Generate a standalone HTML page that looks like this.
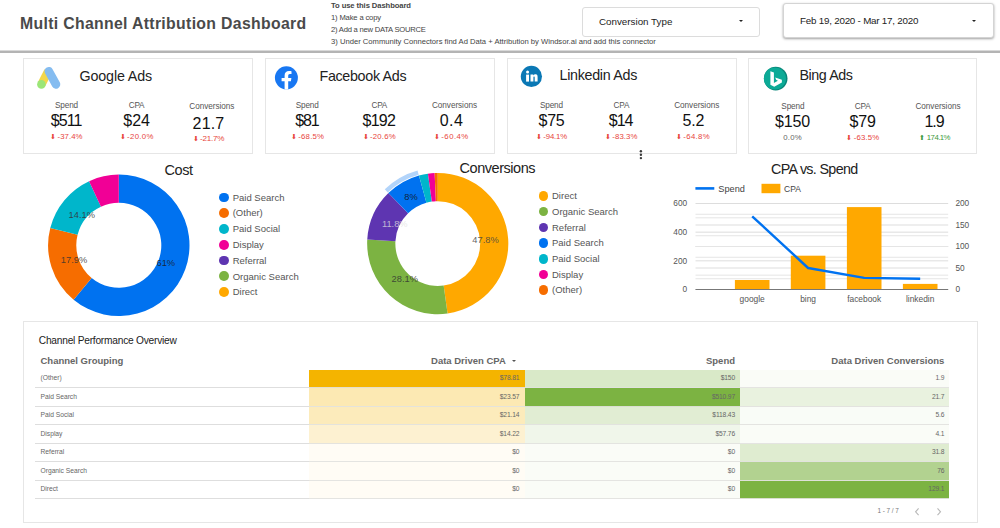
<!DOCTYPE html><html><head><meta charset="utf-8"><title>Multi Channel Attribution Dashboard</title><style>
html,body{margin:0;padding:0;background:#fff;}
body{width:1000px;height:528px;position:relative;overflow:hidden;font-family:"Liberation Sans", sans-serif;color:#222;}
.abs{position:absolute;white-space:nowrap;}
.card{position:absolute;box-sizing:border-box;border:1px solid #e6e6e6;background:#fff;}
.h{position:absolute;white-space:nowrap;font-size:14.5px;letter-spacing:-0.4px;color:#222;line-height:18px;}
.lg{position:absolute;white-space:nowrap;font-size:9.5px;color:#555;line-height:12px;}
.dot{position:absolute;width:9.8px;height:9.8px;border-radius:50%;}
.ins{position:absolute;left:331px;white-space:nowrap;font-size:7.64px;color:#444;line-height:12px;}
.dd{position:absolute;box-sizing:border-box;background:#fff;border:1px solid #dcdcdc;border-radius:3px;}
.ddt{position:absolute;white-space:nowrap;font-size:9.8px;color:#222;line-height:12px;}
.tri{position:absolute;width:0;height:0;border-left:2.7px solid transparent;border-right:2.7px solid transparent;border-top:2.8px solid #222;}
.th{position:absolute;white-space:nowrap;font-size:9.5px;font-weight:bold;color:#666;line-height:12px;}
.rl{position:absolute;left:35px;width:914px;height:1px;background:#dedede;}
.rt{position:absolute;left:40.5px;white-space:nowrap;font-size:6.7px;color:#666;line-height:9px;}
.cell{position:absolute;height:18.5px;}
.cv{position:absolute;white-space:nowrap;font-size:6.7px;letter-spacing:-0.15px;color:#666;line-height:9px;text-align:right;}
</style></head><body>
<div class="abs" style="left:20px;top:12.5px;font-size:15.8px;letter-spacing:0.33px;font-weight:bold;color:#4a4a4a;line-height:22px;">Multi Channel Attribution Dashboard</div>
<div class="ins" style="top:-0.1px;letter-spacing:-0.08px"><b>To use this Dashboard</b></div>
<div class="ins" style="top:12.1px;letter-spacing:-0.16px">1) Make a copy</div>
<div class="ins" style="top:24.3px;letter-spacing:-0.23px">2) Add a new DATA SOURCE</div>
<div class="ins" style="top:35.8px;letter-spacing:0px">3) Under Community Connectors find Ad Data + Attribution by Windsor.ai and add this connector</div>
<div class="dd" style="left:582px;top:7px;width:178px;height:29.5px;"></div>
<div class="ddt" style="left:599px;top:15.5px;">Conversion Type</div>
<div class="tri" style="left:739.2px;top:20px;"></div>
<div class="dd" style="left:783px;top:3px;width:210.5px;height:34.5px;box-shadow:0 1px 2.5px rgba(0,0,0,0.38);border-color:#d4d4d4;"></div>
<div class="ddt" style="left:800px;top:15px;letter-spacing:-0.22px;">Feb 19, 2020 - Mar 17, 2020</div>
<div class="tri" style="left:971.6px;top:20px;"></div>
<div class="abs" style="left:0;top:50px;width:1000px;height:1px;background:#d9d9d9;"></div><div class="abs" style="left:0;top:51px;width:1000px;height:2px;background:#b4b4b4;"></div>
<div class="card" style="left:23px;top:58px;width:230px;height:95.5px;"></div>
<div class="abs" style="left:79.5px;top:66.35px;font-size:14.3px;line-height:20px;letter-spacing:-0.144px;color:#222;">Google Ads</div>
<div class="abs" style="left:-33.47px;top:96.16px;width:200px;text-align:center;font-size:8.2px;line-height:20px;letter-spacing:-0.142px;color:#555;">Spend</div>
<div class="abs" style="left:-33.86px;top:111.36px;width:200px;text-align:center;font-size:16px;line-height:20px;letter-spacing:-0.914px;color:#111;">$511</div>
<div class="abs" style="left:51.28px;top:126.90px;font-size:7.8px;line-height:20px;color:#e8453c;"><span style="display:inline-block;width:7.4px;margin-left:-1.1px;font-size:6.5px;vertical-align:0.3px;">&#11015;</span><span style="letter-spacing:0.039px">-37.4%</span></div>
<div class="abs" style="left:36.49px;top:96.16px;width:200px;text-align:center;font-size:8.2px;line-height:20px;letter-spacing:-0.217px;color:#555;">CPA</div>
<div class="abs" style="left:36.61px;top:111.36px;width:200px;text-align:center;font-size:16px;line-height:20px;letter-spacing:0.018px;color:#111;">$24</div>
<div class="abs" style="left:120.75px;top:126.90px;font-size:7.8px;line-height:20px;color:#e8453c;"><span style="display:inline-block;width:7.4px;margin-left:-1.1px;font-size:6.5px;vertical-align:0.3px;">&#11015;</span><span style="letter-spacing:0.331px">-20.0%</span></div>
<div class="abs" style="left:111.88px;top:96.91px;width:200px;text-align:center;font-size:8.2px;line-height:20px;letter-spacing:-0.043px;color:#555;">Conversions</div>
<div class="abs" style="left:108.48px;top:114.06px;width:200px;text-align:center;font-size:16px;line-height:20px;letter-spacing:0.152px;color:#111;">21.7</div>
<div class="abs" style="left:193.75px;top:129.39px;font-size:8.1px;line-height:20px;color:#e8453c;"><span style="display:inline-block;width:7.4px;margin-left:-1.1px;font-size:6.5px;vertical-align:0.3px;">&#11015;</span><span style="letter-spacing:-0.244px">-21.7%</span></div>
<div class="card" style="left:265px;top:58px;width:230px;height:95.5px;"></div>
<div class="abs" style="left:319.5px;top:66.35px;font-size:14.3px;line-height:20px;letter-spacing:-0.323px;color:#222;">Facebook Ads</div>
<div class="abs" style="left:207.18px;top:96.16px;width:200px;text-align:center;font-size:8.2px;line-height:20px;letter-spacing:-0.142px;color:#555;">Spend</div>
<div class="abs" style="left:206.97px;top:111.36px;width:200px;text-align:center;font-size:16px;line-height:20px;letter-spacing:-1.065px;color:#111;">$81</div>
<div class="abs" style="left:291.98px;top:126.90px;font-size:7.8px;line-height:20px;color:#e8453c;"><span style="display:inline-block;width:7.4px;margin-left:-1.1px;font-size:6.5px;vertical-align:0.3px;">&#11015;</span><span style="letter-spacing:0.206px">-68.5%</span></div>
<div class="abs" style="left:279.29px;top:96.16px;width:200px;text-align:center;font-size:8.2px;line-height:20px;letter-spacing:-0.217px;color:#555;">CPA</div>
<div class="abs" style="left:278.86px;top:111.36px;width:200px;text-align:center;font-size:16px;line-height:20px;letter-spacing:-0.774px;color:#111;">$192</div>
<div class="abs" style="left:363.75px;top:126.90px;font-size:7.8px;line-height:20px;color:#e8453c;"><span style="display:inline-block;width:7.4px;margin-left:-1.1px;font-size:6.5px;vertical-align:0.3px;">&#11015;</span><span style="letter-spacing:0.164px">-20.6%</span></div>
<div class="abs" style="left:354.48px;top:96.16px;width:200px;text-align:center;font-size:8.2px;line-height:20px;letter-spacing:-0.043px;color:#555;">Conversions</div>
<div class="abs" style="left:351.46px;top:111.36px;width:200px;text-align:center;font-size:16px;line-height:20px;letter-spacing:0.419px;color:#111;">0.4</div>
<div class="abs" style="left:435.02px;top:126.90px;font-size:7.8px;line-height:20px;color:#e8453c;"><span style="display:inline-block;width:7.4px;margin-left:-1.1px;font-size:6.5px;vertical-align:0.3px;">&#11015;</span><span style="letter-spacing:0.456px">-60.4%</span></div>
<div class="card" style="left:506.5px;top:58px;width:230px;height:95.5px;"></div>
<div class="abs" style="left:559.5px;top:64.85px;font-size:14.3px;line-height:20px;letter-spacing:-0.300px;color:#222;">Linkedin Ads</div>
<div class="abs" style="left:451.43px;top:96.16px;width:200px;text-align:center;font-size:8.2px;line-height:20px;letter-spacing:-0.142px;color:#555;">Spend</div>
<div class="abs" style="left:451.44px;top:111.36px;width:200px;text-align:center;font-size:16px;line-height:20px;letter-spacing:-0.315px;color:#111;">$75</div>
<div class="abs" style="left:537.00px;top:126.90px;font-size:7.8px;line-height:20px;color:#e8453c;"><span style="display:inline-block;width:7.4px;margin-left:-1.1px;font-size:6.5px;vertical-align:0.3px;">&#11015;</span><span style="letter-spacing:-0.169px">-94.1%</span></div>
<div class="abs" style="left:521.39px;top:96.16px;width:200px;text-align:center;font-size:8.2px;line-height:20px;letter-spacing:-0.217px;color:#555;">CPA</div>
<div class="abs" style="left:520.61px;top:111.36px;width:200px;text-align:center;font-size:16px;line-height:20px;letter-spacing:-0.982px;color:#111;">$14</div>
<div class="abs" style="left:606.00px;top:126.90px;font-size:7.8px;line-height:20px;color:#e8453c;"><span style="display:inline-block;width:7.4px;margin-left:-1.1px;font-size:6.5px;vertical-align:0.3px;">&#11015;</span><span style="letter-spacing:0.081px">-83.3%</span></div>
<div class="abs" style="left:596.73px;top:96.16px;width:200px;text-align:center;font-size:8.2px;line-height:20px;letter-spacing:-0.043px;color:#555;">Conversions</div>
<div class="abs" style="left:593.32px;top:111.36px;width:200px;text-align:center;font-size:16px;line-height:20px;letter-spacing:-0.164px;color:#111;">5.2</div>
<div class="abs" style="left:677.00px;top:126.90px;font-size:7.8px;line-height:20px;color:#e8453c;"><span style="display:inline-block;width:7.4px;margin-left:-1.1px;font-size:6.5px;vertical-align:0.3px;">&#11015;</span><span style="letter-spacing:0.331px">-64.8%</span></div>
<div class="card" style="left:748px;top:58px;width:229px;height:95.5px;"></div>
<div class="abs" style="left:799.5px;top:64.85px;font-size:14.3px;line-height:20px;letter-spacing:-0.431px;color:#222;">Bing Ads</div>
<div class="abs" style="left:692.83px;top:96.91px;width:200px;text-align:center;font-size:8.2px;line-height:20px;letter-spacing:-0.142px;color:#555;">Spend</div>
<div class="abs" style="left:692.43px;top:112.11px;width:200px;text-align:center;font-size:16px;line-height:20px;letter-spacing:-0.149px;color:#111;">$150</div>
<div class="abs" style="left:692.59px;top:127.65px;width:200px;text-align:center;font-size:7.8px;line-height:20px;letter-spacing:0.180px;color:#666;">0.0%</div>
<div class="abs" style="left:762.64px;top:96.91px;width:200px;text-align:center;font-size:8.2px;line-height:20px;letter-spacing:-0.217px;color:#555;">CPA</div>
<div class="abs" style="left:762.53px;top:112.11px;width:200px;text-align:center;font-size:16px;line-height:20px;letter-spacing:-0.148px;color:#111;">$79</div>
<div class="abs" style="left:847.52px;top:127.65px;font-size:7.8px;line-height:20px;color:#e8453c;"><span style="display:inline-block;width:7.4px;margin-left:-1.1px;font-size:6.5px;vertical-align:0.3px;">&#11015;</span><span style="letter-spacing:0.123px">-63.5%</span></div>
<div class="abs" style="left:837.98px;top:96.91px;width:200px;text-align:center;font-size:8.2px;line-height:20px;letter-spacing:-0.043px;color:#555;">Conversions</div>
<div class="abs" style="left:834.10px;top:112.11px;width:200px;text-align:center;font-size:16px;line-height:20px;letter-spacing:-0.997px;color:#111;">1.9</div>
<div class="abs" style="left:920.50px;top:127.65px;font-size:7.8px;line-height:20px;color:#3d9a40;"><span style="display:inline-block;width:7.4px;margin-left:-1.1px;font-size:6.5px;vertical-align:0.3px;">&#11014;</span><span style="letter-spacing:-0.542px">174.1%</span></div>
<svg class="abs" style="left:0;top:0" width="1000" height="160" viewBox="0 0 1000 160">
<line x1="48.2" y1="71.2" x2="41.6" y2="84.2" stroke="#f3d74b" stroke-width="8.4" stroke-linecap="butt"/>
<line x1="48.8" y1="71.2" x2="56" y2="84.4" stroke="#85bcf0" stroke-width="8.6" stroke-linecap="round"/>
<circle cx="41.4" cy="84.4" r="4.3" fill="#9be678"/>
<circle cx="286.4" cy="77.8" r="11.5" fill="#1877f2"/>
<path d="M284.6,89.3 V81.2 H281.6 V77.9 H284.6 V75.6 C284.6,72.6 286.3,71 289,71 C290.2,71 291.5,71.2 291.5,71.2 V74.1 H290 C288.6,74.1 288.2,75 288.2,75.9 V77.9 H291.4 L290.9,81.2 H288.2 V89.3 Z" fill="#fff"/>
<circle cx="531.4" cy="76.4" r="10.6" fill="#0a78b5"/>
<rect x="526.1" y="74.6" width="2.9" height="7" fill="#fff"/><circle cx="527.55" cy="72" r="1.5" fill="#fff"/>
<path d="M530.5,74.4 H533.3 V75.4 C533.8,74.6 534.7,74.2 535.7,74.2 C537.3,74.2 537.6,75.5 537.6,77 V81.6 H534.7 V77.6 C534.7,77 534.5,76.6 533.9,76.6 C533.5,76.6 533.4,77 533.4,77.6 V81.6 H530.5 Z" fill="#fff"/>
<circle cx="775.7" cy="78.6" r="11.8" fill="#088578"/>
<circle cx="774.95" cy="78.5" r="11.05" fill="#0caa96"/>
<polygon points="770.39,71.28 773.91,72.60 773.91,82.89 777.89,80.70 776.09,79.77 775.23,77.38 781.87,79.70 781.87,82.55 774.24,86.87 770.39,84.68" fill="#fff"/>
<circle cx="640.9" cy="151.3" r="1.2" fill="#3a3a3a"/>
<circle cx="640.9" cy="154.7" r="1.2" fill="#3a3a3a"/>
<circle cx="640.9" cy="158.1" r="1.2" fill="#3a3a3a"/>
</svg>
<svg class="abs" style="left:0;top:160px" width="1000" height="160" viewBox="0 160 1000 160" font-family='"Liberation Sans", sans-serif'>
<path d="M118.80,174.60 A70.7,70.7 0 1 1 73.61,299.67 L91.64,277.99 A42.5,42.5 0 1 0 118.80,202.80 Z" fill="#0072f0"/>
<path d="M73.61,299.67 A70.7,70.7 0 0 1 50.27,227.92 L77.60,234.85 A42.5,42.5 0 0 0 91.64,277.99 Z" fill="#f66d00"/>
<path d="M50.27,227.92 A70.7,70.7 0 0 1 89.10,181.14 L100.95,206.73 A42.5,42.5 0 0 0 77.60,234.85 Z" fill="#00b6cb"/>
<path d="M89.10,181.14 A70.7,70.7 0 0 1 118.80,174.60 L118.80,202.80 A42.5,42.5 0 0 0 100.95,206.73 Z" fill="#f10096"/>
<path d="M437.75,172.95 A70.6,70.6 0 0 1 447.57,313.46 L443.65,285.54 A42.4,42.4 0 0 0 437.75,201.15 Z" fill="#ffa800"/>
<path d="M447.57,313.46 A70.6,70.6 0 0 1 367.26,239.53 L395.42,241.14 A42.4,42.4 0 0 0 443.65,285.54 Z" fill="#7cb342"/>
<path d="M367.26,239.53 A70.6,70.6 0 0 1 388.38,193.08 L408.10,213.24 A42.4,42.4 0 0 0 395.42,241.14 Z" fill="#5e35b1"/>
<path d="M388.38,193.08 A70.6,70.6 0 0 1 418.94,175.50 L426.45,202.68 A42.4,42.4 0 0 0 408.10,213.24 Z" fill="#0072f0"/>
<path d="M384.75,189.36 A75.8,75.8 0 0 1 417.55,170.49 L418.70,174.64 A71.5,71.5 0 0 0 387.75,192.44 Z" fill="#0072f0" fill-opacity="0.3"/>
<path d="M418.94,175.50 A70.6,70.6 0 0 1 427.93,173.64 L431.85,201.56 A42.4,42.4 0 0 0 426.45,202.68 Z" fill="#00b6cb"/>
<path d="M427.93,173.64 A70.6,70.6 0 0 1 434.63,173.02 L435.88,201.19 A42.4,42.4 0 0 0 431.85,201.56 Z" fill="#f10096"/>
<path d="M434.63,173.02 A70.6,70.6 0 0 1 437.75,172.95 L437.75,201.15 A42.4,42.4 0 0 0 435.88,201.19 Z" fill="#f66d00"/>
<text x="165.8" y="266" font-size="9.3" text-anchor="middle" fill="#1a1a1a" fill-opacity="0.85">61%</text>
<text x="74" y="263" font-size="9.3" text-anchor="middle" fill="#333" fill-opacity="0.85">17.9%</text>
<text x="81.8" y="218" font-size="9.3" text-anchor="middle" fill="#333" fill-opacity="0.85">14.1%</text>
<text x="485.5" y="243.3" font-size="9.3" text-anchor="middle" fill="#444" fill-opacity="0.85">47.8%</text>
<text x="404.8" y="282" font-size="9.3" text-anchor="middle" fill="#333" fill-opacity="0.85">28.1%</text>
<text x="394.8" y="227.2" font-size="9.3" text-anchor="middle" fill="#e0e0e0" fill-opacity="0.75">11.8%</text>
<text x="411" y="200.3" font-size="9.3" text-anchor="middle" fill="#111" fill-opacity="0.85">8%</text>
<line x1="695.5" x2="948.2" y1="289.50" y2="289.50" stroke="#dddddd" stroke-width="1"/>
<line x1="695.5" x2="948.2" y1="278.75" y2="278.75" stroke="#e5e5e5" stroke-width="1"/>
<line x1="695.5" x2="948.2" y1="268.00" y2="268.00" stroke="#dddddd" stroke-width="1"/>
<line x1="695.5" x2="948.2" y1="257.25" y2="257.25" stroke="#e5e5e5" stroke-width="1"/>
<line x1="695.5" x2="948.2" y1="246.50" y2="246.50" stroke="#dddddd" stroke-width="1"/>
<line x1="695.5" x2="948.2" y1="235.75" y2="235.75" stroke="#e5e5e5" stroke-width="1"/>
<line x1="695.5" x2="948.2" y1="225.00" y2="225.00" stroke="#dddddd" stroke-width="1"/>
<line x1="695.5" x2="948.2" y1="214.25" y2="214.25" stroke="#e5e5e5" stroke-width="1"/>
<line x1="695.5" x2="948.2" y1="203.50" y2="203.50" stroke="#dddddd" stroke-width="1"/>
<line x1="695.5" x2="948.2" y1="275.17" y2="275.17" stroke="#e5e5e5" stroke-width="1"/>
<line x1="695.5" x2="948.2" y1="260.83" y2="260.83" stroke="#dddddd" stroke-width="1"/>
<line x1="695.5" x2="948.2" y1="246.50" y2="246.50" stroke="#e5e5e5" stroke-width="1"/>
<line x1="695.5" x2="948.2" y1="232.17" y2="232.17" stroke="#dddddd" stroke-width="1"/>
<line x1="695.5" x2="948.2" y1="217.83" y2="217.83" stroke="#e5e5e5" stroke-width="1"/>
<rect x="734.9" y="280.0" width="34.6" height="9.7" fill="#ffa800"/>
<rect x="790.8" y="255.7" width="34.6" height="34.0" fill="#ffa800"/>
<rect x="846.9" y="207.1" width="34.6" height="82.6" fill="#ffa800"/>
<rect x="902.9" y="283.9" width="34.6" height="5.8" fill="#ffa800"/>
<line x1="695.5" x2="948.2" y1="289.5" y2="289.5" stroke="#777" stroke-width="1"/>
<polyline points="752.2,216.3 808.1,268.0 864.2,277.9 920.2,278.8" fill="none" stroke="#0072f0" stroke-width="2.4" stroke-linejoin="round"/>
<text x="687.2" y="292.3" font-size="8.3" text-anchor="end" fill="#555">0</text>
<text x="687.2" y="263.6" font-size="8.3" text-anchor="end" fill="#555">200</text>
<text x="687.2" y="235.0" font-size="8.3" text-anchor="end" fill="#555">400</text>
<text x="687.2" y="206.3" font-size="8.3" text-anchor="end" fill="#555">600</text>
<text x="955.4" y="292.3" font-size="8.3" text-anchor="start" fill="#555">0</text>
<text x="955.4" y="270.8" font-size="8.3" text-anchor="start" fill="#555">50</text>
<text x="955.4" y="249.3" font-size="8.3" text-anchor="start" fill="#555">100</text>
<text x="955.4" y="227.8" font-size="8.3" text-anchor="start" fill="#555">150</text>
<text x="955.4" y="206.3" font-size="8.3" text-anchor="start" fill="#555">200</text>
<text x="752.2" y="301.6" font-size="8.4" text-anchor="middle" fill="#555">google</text>
<text x="808.1" y="301.6" font-size="8.4" text-anchor="middle" fill="#555">bing</text>
<text x="864.2" y="301.6" font-size="8.4" text-anchor="middle" fill="#555">facebook</text>
<text x="920.2" y="301.6" font-size="8.4" text-anchor="middle" fill="#555">linkedin</text>
<line x1="695.4" x2="714.3" y1="188.4" y2="188.4" stroke="#0072f0" stroke-width="2.6"/>
<rect x="761.5" y="183.8" width="18.9" height="9.4" fill="#ffa800"/>
<text x="718.3" y="191.9" font-size="9.3" fill="#444" textLength="26.6" lengthAdjust="spacingAndGlyphs">Spend</text>
<text x="784.1" y="191.9" font-size="9.3" fill="#444" textLength="16.8" lengthAdjust="spacingAndGlyphs">CPA</text>
</svg>
<div class="h" style="left:164.5px;top:161px;">Cost</div>
<div class="h" style="left:459.5px;top:158.5px;letter-spacing:-0.45px;">Conversions</div>
<div class="h" style="left:771px;top:159.5px;font-size:14.3px;letter-spacing:-0.66px;">CPA vs. Spend</div>
<div class="dot" style="left:219.25px;top:192.55px;background:#0072f0"></div><div class="lg" style="left:232.7px;top:191.71px;">Paid Search</div>
<div class="dot" style="left:219.25px;top:208.20px;background:#f66d00"></div><div class="lg" style="left:232.7px;top:206.71px;">(Other)</div>
<div class="dot" style="left:219.25px;top:223.90px;background:#00b6cb"></div><div class="lg" style="left:232.7px;top:222.71px;">Paid Social</div>
<div class="dot" style="left:219.25px;top:239.80px;background:#f10096"></div><div class="lg" style="left:232.7px;top:238.71px;">Display</div>
<div class="dot" style="left:219.25px;top:255.70px;background:#5e35b1"></div><div class="lg" style="left:232.7px;top:254.71px;">Referral</div>
<div class="dot" style="left:219.25px;top:271.40px;background:#7cb342"></div><div class="lg" style="left:232.7px;top:270.71px;">Organic Search</div>
<div class="dot" style="left:219.25px;top:287.30px;background:#ffa800"></div><div class="lg" style="left:232.7px;top:285.71px;">Direct</div>
<div class="dot" style="left:538.60px;top:191.00px;background:#ffa800"></div><div class="lg" style="left:552px;top:189.71px;">Direct</div>
<div class="dot" style="left:538.60px;top:206.70px;background:#7cb342"></div><div class="lg" style="left:552px;top:205.71px;">Organic Search</div>
<div class="dot" style="left:538.60px;top:222.60px;background:#5e35b1"></div><div class="lg" style="left:552px;top:221.71px;">Referral</div>
<div class="dot" style="left:538.60px;top:238.30px;background:#0072f0"></div><div class="lg" style="left:552px;top:236.71px;">Paid Search</div>
<div class="dot" style="left:538.60px;top:254.00px;background:#00b6cb"></div><div class="lg" style="left:552px;top:252.71px;">Paid Social</div>
<div class="dot" style="left:538.60px;top:269.60px;background:#f10096"></div><div class="lg" style="left:552px;top:268.71px;">Display</div>
<div class="dot" style="left:538.60px;top:285.30px;background:#f66d00"></div><div class="lg" style="left:552px;top:283.71px;">(Other)</div>
<div class="card" style="left:22.5px;top:320.5px;width:955px;height:202.5px;"></div>
<div class="abs" style="left:38.8px;top:334.7px;font-size:10.2px;letter-spacing:-0.235px;color:#222;line-height:12px;">Channel Performance Overview</div>
<div class="th" style="left:40.5px;top:355px;">Channel Grouping</div>
<div class="th" style="right:494.2px;top:355px;">Data Driven CPA</div>
<div class="tri" style="left:511.8px;top:359.5px;border-left-width:2.3px;border-right-width:2.3px;border-top-width:2.8px;border-top-color:#555"></div>
<div class="th" style="right:265px;top:355px;">Spend</div>
<div class="th" style="right:55.700000000000045px;top:355px;">Data Driven Conversions</div>
<div class="cell" style="left:309px;top:369.5px;width:216px;height:18.5px;background:rgb(244,180,0)"></div>
<div class="cell" style="left:525px;top:369.5px;width:215px;height:18.5px;background:rgb(217,233,200)"></div>
<div class="cell" style="left:740px;top:369.5px;width:209px;height:18.5px;background:rgb(250,252,247)"></div>
<div class="cell" style="left:309px;top:388px;width:216px;height:19px;background:rgb(252,233,179)"></div>
<div class="cell" style="left:525px;top:388px;width:215px;height:19px;background:rgb(124,179,66)"></div>
<div class="cell" style="left:740px;top:388px;width:209px;height:19px;background:rgb(233,242,223)"></div>
<div class="cell" style="left:309px;top:407px;width:216px;height:18px;background:rgb(252,235,187)"></div>
<div class="cell" style="left:525px;top:407px;width:215px;height:18px;background:rgb(225,237,211)"></div>
<div class="cell" style="left:740px;top:407px;width:209px;height:18px;background:rgb(249,252,247)"></div>
<div class="cell" style="left:309px;top:425px;width:216px;height:19px;background:rgb(253,241,209)"></div>
<div class="cell" style="left:525px;top:425px;width:215px;height:19px;background:rgb(240,246,234)"></div>
<div class="cell" style="left:740px;top:425px;width:209px;height:19px;background:rgb(250,252,247)"></div>
<div class="cell" style="left:309px;top:444px;width:216px;height:18px;background:rgb(255,252,245)"></div>
<div class="cell" style="left:525px;top:444px;width:215px;height:18px;background:rgb(250,252,247)"></div>
<div class="cell" style="left:740px;top:444px;width:209px;height:18px;background:rgb(223,236,208)"></div>
<div class="cell" style="left:309px;top:462px;width:216px;height:19px;background:rgb(255,252,245)"></div>
<div class="cell" style="left:525px;top:462px;width:215px;height:19px;background:rgb(250,252,247)"></div>
<div class="cell" style="left:740px;top:462px;width:209px;height:19px;background:rgb(178,210,144)"></div>
<div class="cell" style="left:309px;top:481px;width:216px;height:18px;background:rgb(255,252,245)"></div>
<div class="cell" style="left:525px;top:481px;width:215px;height:18px;background:rgb(250,252,247)"></div>
<div class="cell" style="left:740px;top:481px;width:209px;height:18px;background:rgb(124,179,66)"></div>
<div class="rl" style="top:387px;width:274px;"></div><div class="rl" style="top:387px;left:309px;width:640px;background:rgba(226,226,222,0.92)"></div>
<div class="rt" style="top:372.70px;">(Other)</div>
<div class="cv" style="right:480.70000000000005px;top:372.70px;">$78.81</div>
<div class="cv" style="right:265px;top:372.70px;">$150</div>
<div class="cv" style="right:55.700000000000045px;top:372.70px;">1.9</div>
<div class="rl" style="top:406px;width:274px;"></div><div class="rl" style="top:406px;left:309px;width:640px;background:rgba(226,226,222,0.92)"></div>
<div class="rt" style="top:392.00px;">Paid Search</div>
<div class="cv" style="right:480.70000000000005px;top:392.00px;">$23.57</div>
<div class="cv" style="right:265px;top:392.00px;">$510.97</div>
<div class="cv" style="right:55.700000000000045px;top:392.00px;">21.7</div>
<div class="rl" style="top:424px;width:274px;"></div><div class="rl" style="top:424px;left:309px;width:640px;background:rgba(226,226,222,0.92)"></div>
<div class="rt" style="top:410.30px;">Paid Social</div>
<div class="cv" style="right:480.70000000000005px;top:410.30px;">$21.14</div>
<div class="cv" style="right:265px;top:410.30px;">$118.43</div>
<div class="cv" style="right:55.700000000000045px;top:410.30px;">5.6</div>
<div class="rl" style="top:443px;width:274px;"></div><div class="rl" style="top:443px;left:309px;width:640px;background:rgba(226,226,222,0.92)"></div>
<div class="rt" style="top:428.60px;">Display</div>
<div class="cv" style="right:480.70000000000005px;top:428.60px;">$14.22</div>
<div class="cv" style="right:265px;top:428.60px;">$57.76</div>
<div class="cv" style="right:55.700000000000045px;top:428.60px;">4.1</div>
<div class="rl" style="top:461px;width:274px;"></div><div class="rl" style="top:461px;left:309px;width:640px;background:rgba(226,226,222,0.92)"></div>
<div class="rt" style="top:446.90px;">Referral</div>
<div class="cv" style="right:480.70000000000005px;top:446.90px;">$0</div>
<div class="cv" style="right:265px;top:446.90px;">$0</div>
<div class="cv" style="right:55.700000000000045px;top:446.90px;">31.8</div>
<div class="rl" style="top:480px;width:274px;"></div><div class="rl" style="top:480px;left:309px;width:640px;background:rgba(226,226,222,0.92)"></div>
<div class="rt" style="top:465.80px;">Organic Search</div>
<div class="cv" style="right:480.70000000000005px;top:465.80px;">$0</div>
<div class="cv" style="right:265px;top:465.80px;">$0</div>
<div class="cv" style="right:55.700000000000045px;top:465.80px;">76</div>
<div class="rl" style="top:498px;width:274px;"></div><div class="rl" style="top:498px;left:309px;width:640px;background:rgba(226,226,222,0.92)"></div>
<div class="rt" style="top:484.10px;">Direct</div>
<div class="cv" style="right:480.70000000000005px;top:484.10px;">$0</div>
<div class="cv" style="right:265px;top:484.10px;">$0</div>
<div class="cv" style="right:55.700000000000045px;top:484.10px;">129.1</div>
<div class="abs" style="left:877.5px;top:506px;font-size:6.4px;color:#777;line-height:9px;letter-spacing:-0.05px;">1 - 7 / 7</div>
<svg class="abs" style="left:905px;top:500px" width="50" height="22" viewBox="905 500 50 22"><polyline points="918.6,508.4 915.6,511.8 918.6,515.2" fill="none" stroke="#b8b8b8" stroke-width="1.1"/><polyline points="937.5,508.4 940.5,511.8 937.5,515.2" fill="none" stroke="#b8b8b8" stroke-width="1.1"/></svg>
</body></html>
